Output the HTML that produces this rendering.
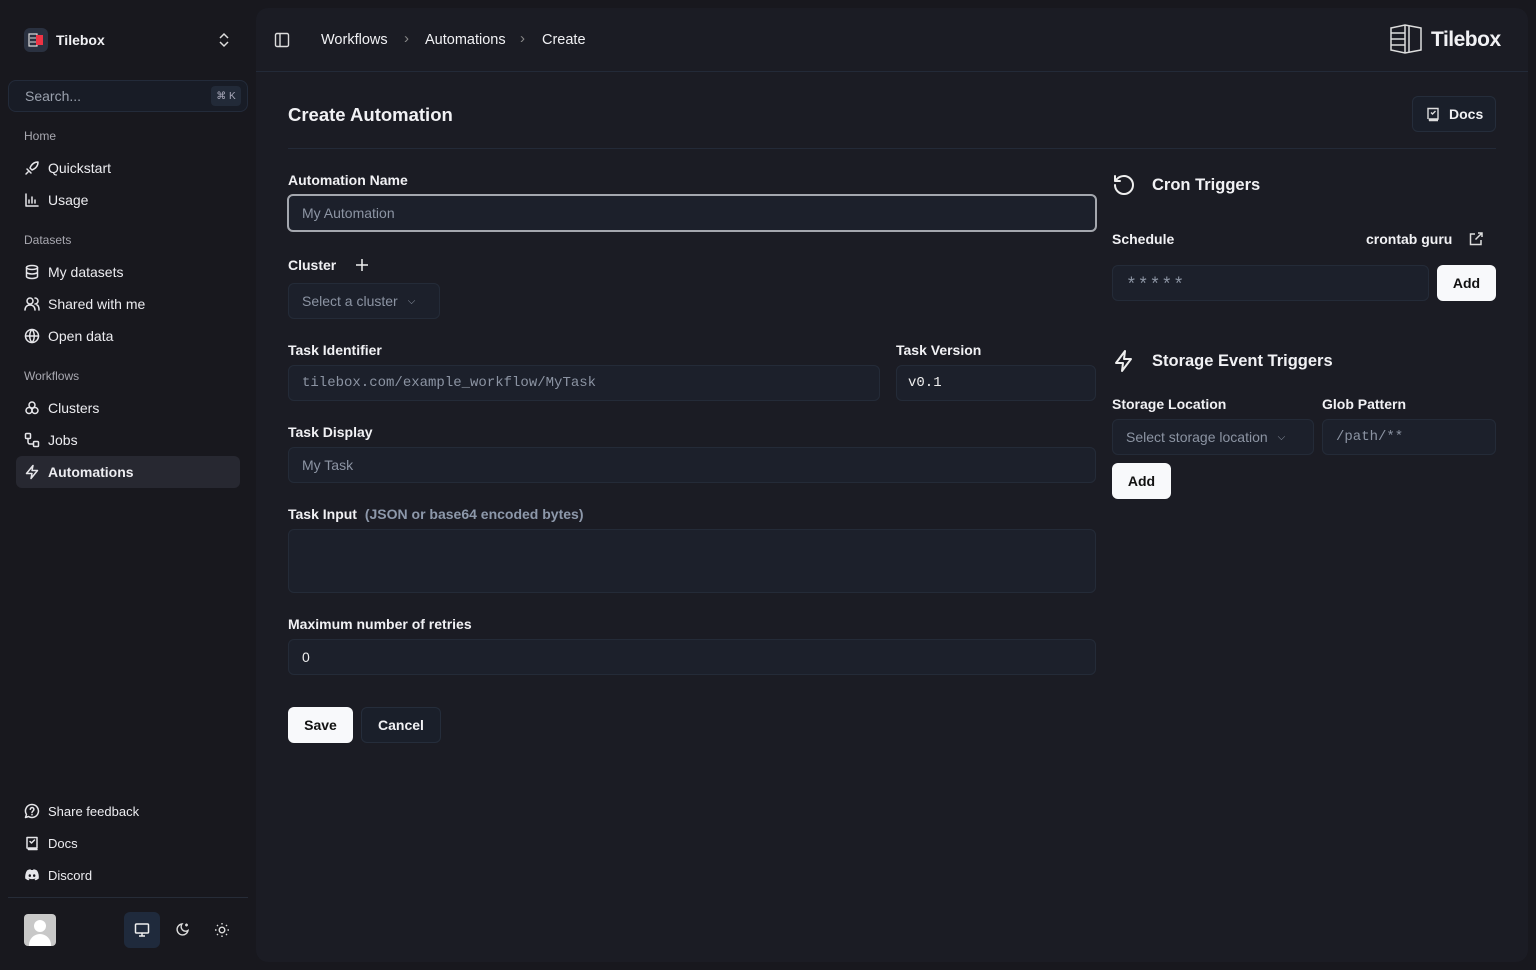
<!DOCTYPE html>
<html><head><meta charset="utf-8"><style>
*{box-sizing:border-box;margin:0;padding:0}
body{width:1536px;height:970px;background:#18181e;font-family:"Liberation Sans",sans-serif;color:#f1f1f4;position:relative;overflow:hidden;font-size:14px}
.a{position:absolute}
.nav{position:absolute;left:24px;display:flex;align-items:center;gap:8px;font-size:14px;color:#ececf0}
.nav svg{width:16px;height:16px;stroke:#e6e6ea;fill:none;stroke-width:1.5;stroke-linecap:round;stroke-linejoin:round}
.sec{position:absolute;left:24px;font-size:12px;color:#a8a8b0}
.main{position:absolute;left:256px;top:8px;width:1272px;height:954px;background:#1b1c24;border-radius:12px}
.lbl{position:absolute;font-size:14px;font-weight:bold;color:#f1f1f4}
.in{position:absolute;background:#1c202b;border:1px solid #242b38;border-radius:6px;height:36px;display:flex;align-items:center;padding-left:13px;color:#8c94a3;font-size:14px}
.mono{font-family:"Liberation Mono",monospace}
.btnw{position:absolute;background:#f8f9fb;color:#111;border-radius:6px;height:36px;display:flex;align-items:center;justify-content:center;font-size:14px;font-weight:bold}
</style></head><body>
<div class="a" style="left:24px;top:28px;width:24px;height:24px;border-radius:6px;background:#2a3140"></div>
<svg class="a" style="left:28px;top:33px" width="16" height="14" viewBox="0 0 16 14"><rect x="1" y="1" width="8" height="12" fill="none" stroke="#ddd" stroke-width="1.2"/><rect x="8" y="2" width="7" height="10" fill="#ee3344"/><path d="M2 5h6M2 9h6" stroke="#ddd"/></svg>
<div class="a" style="left:56px;top:32px;font-weight:bold;font-size:14px">Tilebox</div>
<svg class="a" style="left:217px;top:32px" width="14" height="16" viewBox="0 0 14 16" fill="none" stroke="#ddd" stroke-width="1.5"><path d="M3 6l4-4 4 4M3 10l4 4 4-4"/></svg>
<div class="a" style="left:8px;top:80px;width:240px;height:32px;border:1px solid #232b3a;border-radius:8px;background:#181c26"></div>
<div class="a" style="left:25px;top:88px;color:#9aa1ad;font-size:14px">Search...</div>
<div class="a" style="left:211px;top:86px;width:30px;height:20px;background:#222a38;border-radius:4px;font-size:10px;color:#aab;display:flex;align-items:center;justify-content:center">⌘ K</div>
<div class="sec" style="top:129px">Home</div>
<div class="nav" style="top:160px"><svg viewBox="0 0 16 16"><path d="M4 12l-2 2M3 9l4 4M6 8c2-5 5-6 8-6 0 3-1 6-6 8z"/></svg>Quickstart</div>
<div class="nav" style="top:192px"><svg viewBox="0 0 16 16"><path d="M2 2v12h12M5 11V8M8 11V5M11 11V8"/></svg>Usage</div>
<div class="sec" style="top:233px">Datasets</div>
<div class="nav" style="top:264px"><svg viewBox="0 0 16 16"><ellipse cx="8" cy="3.5" rx="5.5" ry="2"/><path d="M2.5 3.5v9c0 1 2.5 2 5.5 2s5.5-1 5.5-2v-9M2.5 8c0 1 2.5 2 5.5 2s5.5-1 5.5-2"/></svg>My datasets</div>
<div class="nav" style="top:296px"><svg viewBox="0 0 16 16"><circle cx="6" cy="5" r="3"/><path d="M1 14c0-3 2-5 5-5s5 2 5 5M11 2a3 3 0 010 6M13 9c1.5.5 2 2.5 2 5"/></svg>Shared with me</div>
<div class="nav" style="top:328px"><svg viewBox="0 0 16 16"><circle cx="8" cy="8" r="6.5"/><path d="M1.5 8h13M8 1.5c-3 3-3 10 0 13M8 1.5c3 3 3 10 0 13"/></svg>Open data</div>
<div class="sec" style="top:369px">Workflows</div>
<div class="nav" style="top:400px"><svg viewBox="0 0 16 16"><circle cx="8" cy="5" r="3"/><circle cx="5" cy="10.5" r="3"/><circle cx="11" cy="10.5" r="3"/></svg>Clusters</div>
<div class="nav" style="top:432px"><svg viewBox="0 0 16 16"><rect x="1.5" y="1.5" width="5" height="5" rx="1"/><rect x="9.5" y="9.5" width="5" height="5" rx="1"/><path d="M4 6.5V10a2 2 0 002 2h3.5"/></svg>Jobs</div>
<div class="a" style="left:16px;top:456px;width:224px;height:32px;background:#272831;border-radius:6px"></div>
<div class="nav" style="top:464px;font-weight:bold"><svg viewBox="0 0 16 16"><path d="M9 1.5L2.5 9.5H8L7 14.5l6.5-8H8z"/></svg>Automations</div>
<div class="nav" style="top:803px;font-size:13px"><svg viewBox="0 0 16 16"><path d="M8 1.5a6.5 6.5 0 11-3.5 12L1.5 14.5l1-3A6.5 6.5 0 018 1.5zM6.3 6.3a1.8 1.8 0 113 1.4c-.8.5-1.3.8-1.3 1.8M8 11.5v.2"/></svg>Share feedback</div>
<div class="nav" style="top:835px;font-size:13px"><svg viewBox="0 0 16 16"><path d="M3 13V2.5h10V13H4.5a1.5 1.5 0 000 1.5H13M6 6.5l1.5 1.5 3-3"/></svg>Docs</div>
<div class="nav" style="top:867px;font-size:13px"><svg viewBox="0 0 16 16" style="fill:#e6e6ea;stroke:none"><path d="M3 3.5c1.5-1 3-1.3 3.5-1.3l.4.8h2.2l.4-.8c.5 0 2 .3 3.5 1.3 1.5 2.3 2 5 1.8 8-1.2 1-2.6 1.6-3.5 1.8l-.8-1.300c.6-.2 1-.5 1.4-.8-2.6 1.2-5.2 1.2-7.8 0 .4.3.8.6 1.4.8l-.8 1.3c-.9-.2-2.3-.8-3.5-1.8-.2-3 .3-5.7 1.8-8zM5.8 7.3a1.2 1.3 0 100 2.6 1.2 1.3 0 000-2.6zm4.4 0a1.2 1.3 0 100 2.6 1.2 1.3 0 000-2.6z"/></svg>Discord</div>
<div class="a" style="left:8px;top:897px;width:240px;height:1px;background:#262c38"></div>
<div class="a" style="left:24px;top:914px;width:32px;height:32px;background:#c8c8c8;border-radius:4px;overflow:hidden"><div class="a" style="left:10px;top:6px;width:12px;height:12px;border-radius:50%;background:#fff"></div><div class="a" style="left:5px;top:20px;width:22px;height:16px;border-radius:11px 11px 0 0;background:#fff"></div></div>
<div class="a" style="left:124px;top:912px;width:36px;height:36px;background:#1f2a3c;border-radius:6px"></div>
<svg class="a" style="left:134px;top:922px" width="16" height="16" viewBox="0 0 16 16"><rect x="1.5" y="2" width="13" height="9" rx="1" stroke="#eee" fill="none" stroke-width="1.5"/><path d="M8 11v3M5 14h6" stroke="#eee" stroke-width="1.5"/></svg>
<svg class="a" style="left:174px;top:922px" width="16" height="16" viewBox="0 0 16 16" fill="none" stroke="#ddd" stroke-width="1.4"><path d="M8 2a5.5 5.5 0 106 6.5A4.5 4.5 0 018 2zM12.5 1.5v3M11 3h3"/></svg>
<svg class="a" style="left:214px;top:922px" width="16" height="16" viewBox="0 0 16 16" fill="none" stroke="#ddd" stroke-width="1.4"><circle cx="8" cy="8" r="2.8"/><path d="M8 1v1.5M8 13.5V15M1 8h1.5M13.5 8H15M3 3l1 1M12 12l1 1M3 13l1-1M12 4l1-1"/></svg>
<div class="main"></div>
<svg class="a" style="left:274px;top:32px" width="16" height="16" viewBox="0 0 16 16" fill="none" stroke="#ddd" stroke-width="1.4"><rect x="1.5" y="1.5" width="13" height="13" rx="1.5"/><path d="M6 1.5v13"/></svg>
<div class="a" style="left:321px;top:32px;font-size:14.5px">Workflows</div>
<div class="a" style="left:404px;top:30px;color:#888;font-size:15px">›</div>
<div class="a" style="left:425px;top:32px;font-size:14.5px">Automations</div>
<div class="a" style="left:520px;top:30px;color:#888;font-size:15px">›</div>
<div class="a" style="left:542px;top:32px;font-size:14.5px">Create</div>
<svg class="a" style="left:1389px;top:23px" width="34" height="32" viewBox="0 0 34 32" fill="none" stroke="#ddd" stroke-width="1.5"><path d="M2 5l14-3 16 3v22l-16 3-14-3z"/><path d="M16 2v28M2 10h14M2 16h14M2 22h14M20 3.5v25"/></svg>
<div class="a" style="left:1431px;top:28px;font-size:21px;font-weight:bold;letter-spacing:-0.5px">Tilebox</div>
<div class="a" style="left:256px;top:71px;width:1272px;height:1px;background:#232a38"></div>
<div class="a" style="left:288px;top:104px;font-size:18.5px;font-weight:bold">Create Automation</div>
<div class="a" style="left:1412px;top:96px;width:84px;height:36px;border:1px solid #252d3b;background:#1a1f2a;border-radius:6px"></div>
<svg class="a" style="left:1425px;top:106px" width="16" height="16" viewBox="0 0 16 16" fill="none" stroke="#ddd" stroke-width="1.4"><path d="M3 13V2.5h10V13H4.5a1.5 1.5 0 000 1.5H13M6 6.5l1.5 1.5 3-3"/></svg>
<div class="a" style="left:1449px;top:106px;font-weight:bold;font-size:14px">Docs</div>
<div class="a" style="left:288px;top:148px;width:1208px;height:1px;background:#232a38"></div>

<div class="lbl" style="left:288px;top:172px">Automation Name</div>
<div class="in" style="left:287px;top:194px;width:810px;height:38px;border:2px solid #a4a7ae;background:#1c202b">My Automation</div>
<div class="lbl" style="left:288px;top:257px">Cluster</div>
<svg class="a" style="left:354px;top:257px" width="16" height="16" viewBox="0 0 16 16" stroke="#eee" stroke-width="1.5"><path d="M8 2v12M2 8h12"/></svg>
<div class="in" style="left:288px;top:283px;width:152px">Select a cluster <span style="margin-left:10px;font-size:10px">⌵</span></div>
<div class="lbl" style="left:288px;top:342px">Task Identifier</div>
<div class="in mono" style="left:288px;top:365px;width:592px">tilebox.com/example_workflow/MyTask</div>
<div class="lbl" style="left:896px;top:342px">Task Version</div>
<div class="in mono" style="left:896px;top:365px;width:200px;color:#eee;padding-left:11px">v0.1</div>
<div class="lbl" style="left:288px;top:424px">Task Display</div>
<div class="in" style="left:288px;top:447px;width:808px">My Task</div>
<div class="lbl" style="left:288px;top:506px">Task Input <span style="color:#8d98aa;font-weight:bold;margin-left:4px">(JSON or base64 encoded bytes)</span></div>
<div class="in" style="left:288px;top:529px;width:808px;height:64px"></div>
<div class="lbl" style="left:288px;top:616px">Maximum number of retries</div>
<div class="in" style="left:288px;top:639px;width:808px;color:#eee">0</div>
<div class="btnw" style="left:288px;top:707px;width:65px">Save</div>
<div class="a" style="left:361px;top:707px;width:80px;height:36px;border:1px solid #252d3b;background:#1a1f2a;border-radius:6px;display:flex;align-items:center;justify-content:center;font-weight:bold">Cancel</div>

<svg class="a" style="left:1112px;top:173px" width="24" height="24" viewBox="0 0 24 24" fill="none" stroke="#eee" stroke-width="2" stroke-linecap="round" stroke-linejoin="round"><path d="M3 12a9 9 0 109-9 9.7 9.7 0 00-6.7 2.7L3 8M3 3v5h5"/></svg>
<div class="a" style="left:1152px;top:176px;font-size:16.5px;font-weight:bold">Cron Triggers</div>
<div class="lbl" style="left:1112px;top:231px">Schedule</div>
<div class="lbl" style="left:1366px;top:231px">crontab guru</div>
<svg class="a" style="left:1468px;top:231px" width="16" height="16" viewBox="0 0 16 16" fill="none" stroke="#ddd" stroke-width="1.5"><path d="M13 9v4.5H2.5V3H7M10 2h4v4M14 2L7.5 8.5"/></svg>
<div class="in mono" style="left:1112px;top:265px;width:317px;font-size:18px;letter-spacing:1px;padding-top:6px">*****</div>
<div class="btnw" style="left:1437px;top:265px;width:59px">Add</div>
<svg class="a" style="left:1112px;top:349px" width="24" height="24" viewBox="0 0 24 24" fill="none" stroke="#eee" stroke-width="2" stroke-linejoin="round"><path d="M13 2L4 14h7l-1 8 9-12h-7z"/></svg>
<div class="a" style="left:1152px;top:352px;font-size:16.5px;font-weight:bold">Storage Event Triggers</div>
<div class="lbl" style="left:1112px;top:396px">Storage Location</div>
<div class="lbl" style="left:1322px;top:396px">Glob Pattern</div>
<div class="in" style="left:1112px;top:419px;width:202px">Select storage location <span style="margin-left:10px;font-size:10px">⌵</span></div>
<div class="in mono" style="left:1322px;top:419px;width:174px">/path/**</div>
<div class="btnw" style="left:1112px;top:463px;width:59px">Add</div>
</body></html>
